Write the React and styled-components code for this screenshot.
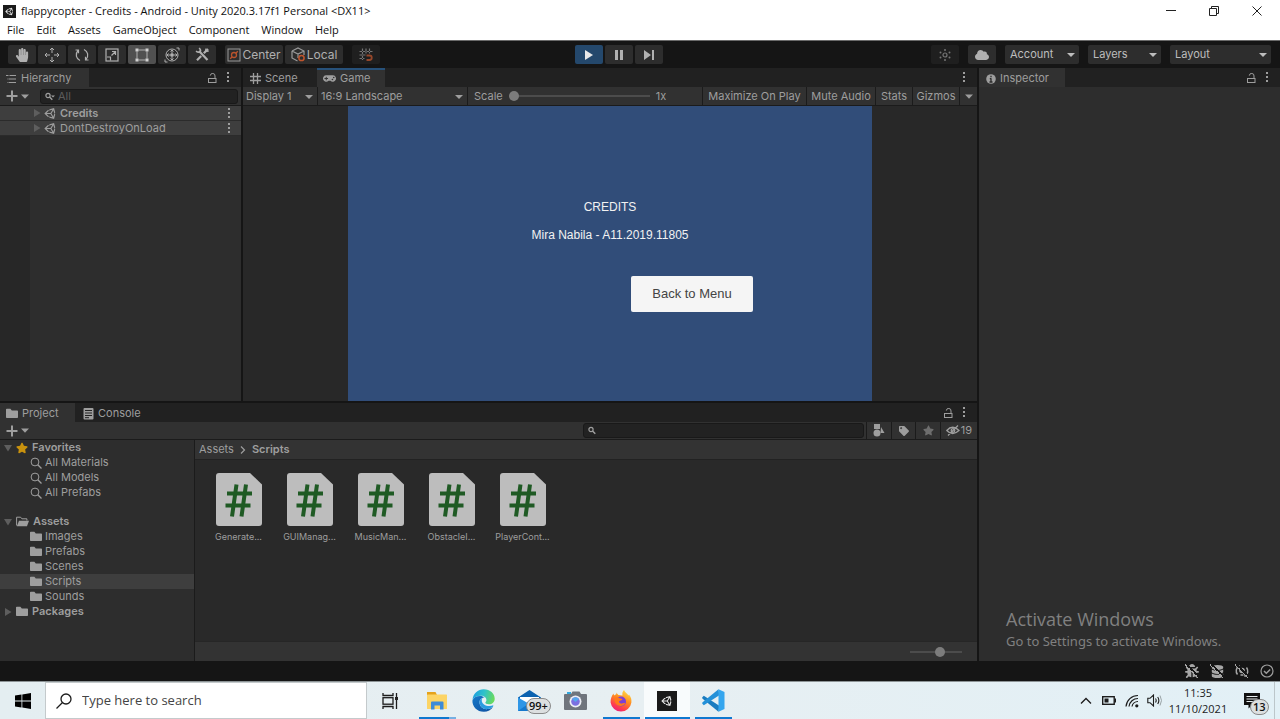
import React from "react";
import styled, { createGlobalStyle, css } from "styled-components";
import { FaHandPaper, FaUnity, FaCloud, FaStar, FaTag, FaBug, FaDatabase, FaGamepad } from "react-icons/fa";

const color = {
  bar: "#151515",
  strip: "#212121",
  panel: "#2d2d2d",
  tool: "#313131",
  deep: "#292929",
  line: "#1b1b1b",
  select: "#3e3e3e",
  text: "#9e9e9e",
  bright: "#bdbdbd",
  dim: "#5c5c5c",
};

const Global = createGlobalStyle`
  * { box-sizing: border-box; }
  body { margin: 0; background: ${color.bar}; }
  button, input, select { font: inherit; color: inherit; border: 0; margin: 0; padding: 0; background: none; border-radius: 0; outline: 0; }
  ul, ol { list-style: none; margin: 0; padding: 0; }
  h1, h2, p { margin: 0; font-weight: 400; }
  svg { display: block; flex: none; }
`;

const Page = styled.div`
  min-height: 100vh;
  display: flex;
  flex-direction: column;
  font: 11px/15px Inter, "Liberation Sans", sans-serif;
  color: ${color.text};
  white-space: nowrap;
`;

/* window frame */
const TitleBar = styled.header`
  display: flex;
  align-items: center;
  height: 22px;
  padding-left: 3px;
  gap: 5px;
  background: #fff;
  color: #111;
  font: 11px/16px "Open Sans", "Noto Sans", sans-serif;
`;
const AppBadge = styled.span`
  display: grid;
  place-items: center;
  width: ${(p) => p.$size}px;
  height: ${(p) => p.$size}px;
  background: #1a1a1a;
  color: #e6e6e6;
`;
const WindowButtons = styled.div`
  display: flex;
  margin-left: auto;
`;
const WindowButton = styled.button`
  display: grid;
  place-items: center;
  width: 43px;
  height: 20px;
  color: #222;
  &:last-child { margin-right: 2px; }
`;
const MenuBar = styled.nav`
  display: flex;
  gap: 12px;
  height: 19px;
  padding: 0 0 2px 7px;
  background: #fff;
  color: #111;
  border-bottom: 1px solid #6a6a6a;
  font: 11px/16px "Open Sans", "Noto Sans", sans-serif;
`;

/* top toolbar */
const Toolbar = styled.div`
  display: grid;
  grid-template-columns: 1fr auto 1fr;
  align-items: center;
  height: 27px;
  padding: 0 9px 0 8px;
  background: ${color.bar};
`;
const ToolSide = styled.div`
  display: flex;
  gap: 9px;
  justify-content: ${(p) => (p.$end ? "flex-end" : "flex-start")};
`;
const ButtonGroup = styled.div`
  display: flex;
  gap: 2px;
`;
const PlayGroup = styled(ButtonGroup)`
  margin-right: 42px;
`;
const ToolButton = styled.button`
  display: flex;
  align-items: center;
  justify-content: center;
  gap: 1px;
  width: ${(p) => p.$w || 28}px;
  height: 19px;
  border-radius: 2px;
  background: ${(p) => (p.$play ? "#24486c" : p.$on ? "#505050" : p.$faint ? "#1f1f1f" : "#2d2d2d")};
  color: ${(p) => (p.$faint ? "#747474" : "#b0b0b0")};
  ${(p) => p.$play && css`color: #e8e8e8;`}
`;
const WordButton = styled(ToolButton)`
  width: 58px;
  font-size: 12px;
`;
const SelectWrap = styled.label`
  position: relative;
  display: flex;
  align-items: center;
  width: ${(p) => p.$w}px;
  height: 19px;
  border-radius: ${(p) => (p.$flat ? 0 : 2)}px;
  background: ${(p) => (p.$flat ? "none" : "#2d2d2d")};
  color: ${(p) => (p.$flat ? color.text : color.bright)};
  &::after {
    content: "";
    position: absolute;
    right: 4px;
    top: 8px;
    border: 4px solid transparent;
    border-top-color: currentColor;
    border-bottom: 0;
    pointer-events: none;
  }
`;
const Select = styled.select`
  appearance: none;
  width: 100%;
  height: 100%;
  padding-left: ${(p) => p.$pad}px;
`;

/* docked panels */
const Workspace = styled.main`
  flex: 1;
  display: grid;
  grid-template-columns: minmax(0, 1fr) 301px;
  gap: 2px;
  background: ${color.bar};
`;
const LeftSide = styled.div`
  display: flex;
  flex-direction: column;
  gap: 2px;
`;
const UpperDock = styled.div`
  flex: 1;
  display: grid;
  grid-template-columns: 241px minmax(0, 1fr);
  gap: 2px;
`;
const Panel = styled.section`
  display: flex;
  flex-direction: column;
  min-width: 0;
  background: ${color.panel};
`;
const ProjectPanel = styled(Panel)`
  min-height: 258px;
`;
const TabStrip = styled.div`
  display: flex;
  align-items: stretch;
  height: 19px;
  padding-right: 11px;
  background: ${color.strip};
`;
const Tab = styled.button`
  display: flex;
  align-items: center;
  gap: 4px;
  width: ${(p) => p.$w}px;
  padding-left: ${(p) => p.$pad || 6}px;
  border-top: 2px solid ${(p) => (p.$focus ? "#27517a" : p.$on ? color.tool : "transparent")};
  background: ${(p) => (p.$on ? color.tool : "none")};
`;
const StripTools = styled.div`
  display: flex;
  align-items: center;
  gap: 9px;
  margin-left: auto;
`;
const IconButton = styled.button`
  display: grid;
  place-items: center;
`;
const PanelBar = styled.div`
  display: flex;
  align-items: center;
  height: ${(p) => p.$h || 19}px;
  background: ${color.tool};
  border-bottom: 1px solid ${color.line};
`;
const AddButton = styled.button`
  display: flex;
  align-items: center;
  gap: 3px;
  padding: 0 11px 0 6px;
`;
const SearchField = styled.label`
  display: flex;
  align-items: center;
  gap: 3px;
  width: ${(p) => p.$w}px;
  height: 15px;
  margin: ${(p) => (p.$end ? "0 2px 0 auto" : "0")};
  padding-left: 4px;
  border: 1px solid #191919;
  border-radius: 3px;
  background: #222;
`;
const SearchInput = styled.input`
  flex: 1;
  min-width: 0;
  &::placeholder { color: ${color.dim}; opacity: 1; }
`;
const ScenePane = styled.div`
  flex: 1;
  background: linear-gradient(to right, #272727 30px, ${color.panel} 30px);
`;
const SceneRow = styled.li`
  display: flex;
  align-items: center;
  gap: 3px;
  height: 15px;
  padding: 0 10px 0 33px;
  background: ${color.select};
  border-bottom: 1px solid #2b2b2b;
  font-weight: ${(p) => (p.$bold ? 600 : 400)};
  & > button { margin-left: auto; }
`;
const Cell = styled.div`
  display: flex;
  align-items: center;
  height: 100%;
  width: ${(p) => p.$w}px;
  flex: ${(p) => (p.$grow ? 1 : "none")};
  padding-left: ${(p) => p.$pad || 0}px;
  gap: 6px;
`;
const BarButton = styled.button`
  display: flex;
  align-items: center;
  justify-content: center;
  gap: 1px;
  flex: none;
  width: ${(p) => p.$w}px;
  height: 18px;
  border-left: 1px solid ${color.line};
  color: ${(p) => (p.$muted ? "#6e6e6e" : color.text)};
`;
const DividedCell = styled(Cell)`
  border-right: 1px solid ${color.line};
`;
const Range = styled.input`
  appearance: none;
  width: ${(p) => p.$w}px;
  height: 10px;
  background: linear-gradient(#4c4c4c, #4c4c4c) center / 100% 2px no-repeat;
  &::-webkit-slider-thumb {
    appearance: none;
    width: 10px;
    height: 10px;
    border-radius: 50%;
    background: #7c7c7c;
  }
`;

/* game view */
const GameArea = styled.div`
  flex: 1;
  display: flex;
  justify-content: center;
  background: #282828;
`;
const GameCanvas = styled.div`
  display: flex;
  flex-direction: column;
  align-items: center;
  width: 524px;
  max-width: 100%;
  padding-top: 93px;
  background: #314d79;
  color: #f2f2f2;
  font: 13px/16px "Liberation Sans", Arial, sans-serif;
`;
const GameTitle = styled.h1`
  font-size: 12px;
  line-height: 16px;
  margin-bottom: 12px;
`;
const GameLine = styled.p`
  font-size: 12px;
`;
const MenuButton = styled.button`
  margin: 33px 0 0 164px;
  width: 122px;
  height: 36px;
  border-radius: 2px;
  background: #f5f5f5;
  color: #444;
`;

/* project panel */
const ProjectBody = styled.div`
  flex: 1;
  display: grid;
  grid-template-columns: 195px minmax(0, 1fr);
`;
const Tree = styled.ul`
  border-right: 1px solid ${color.line};
`;
const TreeRow = styled.li`
  height: 15px;
  margin-bottom: ${(p) => (p.$gap ? 14 : 0)}px;
  background: ${(p) => (p.$on ? color.select : "none")};
`;
const TreeButton = styled.button`
  display: flex;
  align-items: center;
  gap: ${(p) => (p.$child ? 3 : 4)}px;
  width: 100%;
  height: 15px;
  padding-left: ${(p) => (p.$child ? 30 : 4)}px;
  font-weight: ${(p) => (p.$child ? 400 : 600)};
`;
const Browser = styled.div`
  display: flex;
  flex-direction: column;
  background: ${color.deep};
`;
const Crumbs = styled.nav`
  display: flex;
  align-items: center;
  gap: 6px;
  height: 20px;
  padding-left: 4px;
  background: #333;
  border-bottom: 1px solid #222;
`;
const Current = styled.span`
  font-weight: 600;
`;
const Files = styled.ul`
  flex: 1;
  display: flex;
  padding: 13px 8px;
`;
const FileButton = styled.button`
  display: flex;
  flex-direction: column;
  align-items: center;
  gap: 4px;
  width: 71px;
  font-size: 9px;
  line-height: 14px;
`;
const BrowserFooter = styled.div`
  display: flex;
  align-items: center;
  justify-content: flex-end;
  height: 20px;
  padding-right: 15px;
  background: #333;
  border-top: 1px solid #262626;
`;

/* activation notice */
const Watermark = styled.aside`
  margin-top: auto;
  padding: 0 0 10px 27px;
  color: #808080;
  font: 13px/20px "Noto Sans", "Open Sans", sans-serif;
`;
const WatermarkTitle = styled.h2`
  font: 18px/23px "Open Sans", "Noto Sans", sans-serif;
`;

const StatusBar = styled.footer`
  display: flex;
  align-items: center;
  justify-content: flex-end;
  gap: 11px;
  height: 20px;
  padding-right: 6px;
  background: ${color.bar};
`;

/* taskbar */
const Taskbar = styled.nav`
  display: flex;
  height: 38px;
  border-top: 1px solid #8d9496;
  background: linear-gradient(to right, #e4eef1, #e7eff2 50%, #e2f0f6);
  color: #1c1c1c;
  font-family: "Open Sans", "Noto Sans", sans-serif;
`;
const TaskButton = styled.button`
  position: relative;
  display: grid;
  place-items: center;
  width: ${(p) => p.$w || 46}px;
  height: 37px;
  background: ${(p) => (p.$active ? "#f8fbfc" : "none")};
  &::after {
    content: "";
    position: absolute;
    left: ${(p) => (p.$active ? 1 : 5)}px;
    right: ${(p) => (p.$active ? 0 : 4)}px;
    bottom: 0;
    height: 2px;
    background: ${(p) => (p.$multi ? "linear-gradient(to right, #0f78d0 30px, #76b0e2 30px)" : p.$run || p.$active ? "#0f78d0" : "none")};
  }
`;
const TaskSearch = styled.label`
  display: flex;
  align-items: center;
  gap: 10px;
  width: 322px;
  padding-left: 10px;
  background: #fff;
  border: 1px solid #c4cacc;
`;
const TaskInput = styled.input`
  flex: 1;
  font-size: 13px;
  &::placeholder { color: #444; opacity: 1; }
`;
const Count = styled.span`
  position: absolute;
  left: ${(p) => p.$x}px;
  top: ${(p) => p.$y}px;
  padding: 0 2px;
  min-width: 18px;
  border: 1px solid #8a8a8a;
  border-radius: 8px;
  background: #dcdfe0;
  color: #111;
  font-size: 11px;
  font-weight: 600;
  line-height: 14px;
  text-align: center;
`;
const Tray = styled.div`
  display: flex;
  align-items: center;
  margin-left: auto;
  padding-right: 2px;
`;
const TrayButton = styled.button`
  display: grid;
  place-items: center;
  width: 23px;
  height: 37px;
`;
const Clock = styled.button`
  width: 64px;
  font-size: 11px;
  line-height: 16px;
  text-align: center;
`;
const ShowDesktop = styled.button`
  width: 4px;
  height: 37px;
  border-left: 1px solid #bcc6ca;
`;

/* drawings */
const Ico = ({ s = 16, w = s, h = s, vb = `0 0 ${w} ${h}`, sw = 1, children }) => (
  <svg width={w} height={h} viewBox={vb} fill="none" stroke="currentColor" strokeWidth={sw} aria-hidden="true">
    {children}
  </svg>
);
const Fill = { fill: "currentColor", stroke: "none" };

const Dots = () => (
  <Ico w={4} h={11}>
    <g {...Fill}><rect x="1" y="0" width="2" height="2" /><rect x="1" y="4" width="2" height="2" /><rect x="1" y="8" width="2" height="2" /></g>
  </Ico>
);
const Lock = () => (
  <Ico w={9} h={10}><rect x=".5" y="5.5" width="7.5" height="4" /><path d="M7 5.500V3A2.200 2.200 0 0 0 2.300 2.600" /></Ico>
);
const Down = () => <Ico w={8} h={5}><path d="M0 .5h8L4 4.800z" {...Fill} /></Ico>;
const Fold = ({ open }) => (
  <Ico w={8} h={8}><path d={open ? "M0 1h8L4 7.500z" : "M1 0v8l6.500-4z"} fill="#5e5e5e" stroke="none" /></Ico>
);
const Plus = () => <Ico w={12} h={12} sw={2}><path d="M6 .5v11M.5 6h11" /></Ico>;
const Folder = () => <Ico w={12} h={11}><path {...Fill} d="M0 1.500Q0 .7.8.7h3.600l1.400 1.800h5.400q.8 0 .8.8v6q0 .8-.8.8H.8Q0 10.100 0 9.300z" /></Ico>;
const FolderOpen = () => (
  <Ico w={13} h={11}><path d="M.6 9.500V1.200h4l1.300 1.600h5v1.700" /><path {...Fill} d="M3 4.800h10l-2 5.400H.8z" /></Ico>
);
const Magnify = () => <Ico s={12}><circle cx="5" cy="5" r="3.900" /><path d="M7.800 7.800l3.700 3.700" strokeWidth="1.300" /></Ico>;
const SmallMag = ({ arrow }) => (
  <Ico w={10} h={9}><circle cx="3" cy="3.500" r="2.100" strokeWidth="1.200" /><path d="M4.500 5l2.800 2.800" strokeWidth="1.500" />{arrow && <path {...Fill} d="M6 3.500h4L8 5.500z" />}</Ico>
);
const HierarchyIcon = () => <Ico w={11} h={10} sw={1.2}><path d="M0 1.500h2.500M3.500 1.500H10M2.500 5H10M2.500 8.500H10M1.500 5h.5M1.500 8.500h.5" /></Ico>;
const GridIcon = () => <Ico w={11} h={11} sw={1.3}><path d="M3.500 0v11M7.500 0v11M0 3.500h11M0 7.500h11" /></Ico>;
const ConsoleIcon = () => (
  <Ico w={11} h={12}><rect {...Fill} x=".5" y="0" width="10" height="11.500" rx="1" /><path d="M2 2.500h7M2 5h7M2 7.500h7M2 9.700h4" stroke="#222" /></Ico>
);
const InfoIcon = () => (
  <Ico w={10} h={10}><circle {...Fill} cx="5" cy="5" r="4.800" /><path d="M5 1.800v1.500M5 4.300v3.700M3.800 4.600H5M3.500 8h3" stroke="#2a2a2a" strokeWidth="1.300" /></Ico>
);

const MoveIcon = () => (
  <Ico s={16}><path d="M8 1v5M8 10v5M1 8h5M10 8h5M6 3l2-2 2 2M6 13l2 2 2-2M3 6L1 8l2 2M13 6l2 2-2 2" /></Ico>
);
const RotateIcon = () => (
  <Ico s={16} sw={1.2}><path d="M6 13.500C2 11.500 1 7 4 3.500M1.500 3h3v3.200M10 2.500c4 2 5 6.500 2 10M14.500 13h-3V9.800" /></Ico>
);
const ScaleIcon = () => <Ico s={14} sw={1.2}><rect x="1" y="1" width="12" height="12" /><path d="M2 9h3.500v3.500M6.500 7.500L10.500 3.500M7 3.500h3.500V7" /></Ico>;
const RectIcon = () => (
  <Ico s={14}><path d="M3.500 2h7M3.500 12h7M2 3.500v7M12 3.500v7" /><g fill="#d0d0d0" stroke="none"><rect x="0.500" y="0.500" width="3" height="3" /><rect x="10.500" y="0.500" width="3" height="3" /><rect x="0.500" y="10.500" width="3" height="3" /><rect x="10.500" y="10.500" width="3" height="3" /></g></Ico>
);
const TransformIcon = () => (
  <Ico s={16}><circle cx="8" cy="8" r="6" /><path d="M8 3v10M3 8h10M6.500 4.500L8 3l1.500 1.500M6.500 11.500L8 13l1.500-1.500M4.500 6.500L3 8l1.500 1.500M11.500 6.500L13 8l-1.500 1.500M12.500 1H15v2.500M1 12.500V15h2.500" /><rect {...Fill} x="6.500" y="6.500" width="3" height="3" /></Ico>
);
const ToolsIcon = () => (
  <Ico s={15}><path d="M4 4l8.500 9" strokeWidth="2.200" /><path d="M1 4.200Q3.500 6 5 4.800T4.200 1" strokeWidth="1.600" /><path d="M13 2L8.800 6.300M6.200 9L2 13.200" strokeWidth="2.200" /><path d="M11 1.500L10.500 4.500 13.700 4" strokeWidth="1.300" /></Ico>
);
const CenterIcon = () => (
  <Ico s={14}><rect x="1" y="1" width="12" height="12" stroke="#999" /><g stroke="#b9532d" strokeWidth="1.300"><circle cx="7" cy="7" r="2.500" /><path d="M8.800 5.200l2-2M5.200 8.800l-2 2" /></g></Ico>
);
const LocalIcon = () => (
  <Ico s={15}><path d="M1 4l6-3 6 3v4M1 4v7l5.500 3M1 4l6 3 6-3M7 7v4" stroke="#999" strokeWidth="1.200" /><circle cx="10.500" cy="11" r="2.600" stroke="#c0552d" strokeWidth="1.500" /></Ico>
);
const SnapIcon = () => (
  <Ico s={14} sw={1.2}><path d="M3.500 .5V12M7 .5v5M10.500 .5v5M.5 3.500h13M.5 7h6M.5 10.500h5" strokeDasharray="2.500 1" /><path d="M7.500 7.500h3a2.200 2.200 0 0 1 0 4.500h-3" stroke="#96472a" strokeWidth="1.800" /></Ico>
);
const CollabIcon = () => (
  <Ico s={12}><circle cx="6" cy="6" r="2" strokeWidth="1.200" /><g {...Fill}><circle cx="6" cy="1" r="1" /><circle cx="6" cy="11" r="1" /><circle cx="1.500" cy="3.500" r="1" /><circle cx="10.500" cy="3.500" r="1" /><circle cx="1.500" cy="8.500" r="1" /><circle cx="10.500" cy="8.500" r="1" /></g></Ico>
);
const FilterIcon = () => <Ico w={12} h={13}><g {...Fill}><rect x="1" y="0" width="6" height="5" /><circle cx="4" cy="9" r="3.500" /><path d="M8 3l3.500 6H7.500z" /></g></Ico>;
const HiddenIcon = () => (
  <Ico w={14} h={11} sw={1.3}><path d="M.8 5.500Q6.500-1 13 5.500 6.500 11.500.8 5.500zM2 10.500L12 .5" /><circle cx="7" cy="5.500" r="1.800" /></Ico>
);
const ScriptIcon = () => (
  <svg width="46" height="53" viewBox="0 0 46 53" aria-hidden="true">
    <path d="M3 0h31l12 11.500V50a3 3 0 0 1-3 3H3a3 3 0 0 1-3-3V3a3 3 0 0 1 3-3z" fill="#bdbdbd" />
    <path d="M20.500 11.500l-4.500 32M30 11.500l-4.500 32M11 20.500h25M9.500 32.500h25" stroke="#1f5a24" strokeWidth="4" fill="none" />
  </svg>
);
const Slash = styled.span`
  position: relative;
  display: grid;
  place-items: center;
  width: 14px;
  height: 14px;
  color: #a6a6a6;
  &::after {
    content: "";
    position: absolute;
    inset: 0;
    background: linear-gradient(45deg, transparent 44%, #a6a6a6 44% 50%, ${color.bar} 50% 58%, transparent 58%);
  }
`;
const CheckRing = () => <Ico s={14} sw={1.2}><circle cx="7" cy="7" r="6" /><path d="M4 7l2.300 2.300L10.200 5.500" strokeWidth="1.500" /></Ico>;
const LightIcon = () => <Ico s={14} sw={1.5}><circle {...Fill} cx="7" cy="6.500" r="2.800" /><path d="M2.500 10.500A5.700 5.700 0 0 1 4 2M11.500 3.500A5.700 5.700 0 0 1 10 12M5.500 11h3M1.500 2H4v2.500M12.500 12H10V9.500" /></Ico>;

const WindowsLogo = () => (
  <Ico w={16} h={16}><path fill="#000" stroke="none" d="M0 2.500L6.500 1.500v6H0zM7.300 1.400L16 0v7.500H7.300zM0 8.400h6.500v6L0 13.500zM7.300 8.400H16V16l-8.700-1.400z" /></Ico>
);
const TaskView = () => (
  <Ico w={17} h={16} sw={1.3}><path d="M1 0v2.500h10V0M1 16v-2.500h10V16M14.500 0v16" /><rect x="1" y="4.700" width="10" height="6.500" /><rect x="13" y="4" width="3" height="3" fill="#222" stroke="none" /></Ico>
);
const Explorer = () => (
  <Ico w={20} h={18}><g stroke="none"><path fill="#e5a21b" d="M0 0h8.500l1.500 3H0z" /><rect y="2.500" width="20" height="14.500" rx=".6" fill="#fcd465" /><path fill="#3d8bd8" d="M4 17.500V10.500Q4 9.500 5 9.500h10.500q1 0 1 1v7h-3.500V13.500H7.500v4z" /></g></Ico>
);
const Edge = () => (
  <svg width="23" height="23" viewBox="0 0 23 23" aria-hidden="true">
    <defs>
      <linearGradient id="edgeTop" x1="0" x2="1" y1=".3" y2=".5"><stop offset="0" stopColor="#1b9de2" /><stop offset=".5" stopColor="#2fc2c9" /><stop offset="1" stopColor="#6bdb5a" /></linearGradient>
      <linearGradient id="edgeLow" x1="0" x2="1" y1="0" y2="1"><stop offset="0" stopColor="#1679c9" /><stop offset="1" stopColor="#0f4f9f" /></linearGradient>
    </defs>
    <path fill="url(#edgeTop)" d="M.5 11C1 4.500 6 .3 11.700.3c6.500 0 11 4.500 11 9.400 0 3.400-2.600 5.600-5.700 5.600-2.500 0-4-.9-3.600-2 .3-.6 1-1 1-2.400 0-2.400-2.500-4.200-5.400-4.200C5.500 6.700 2 8 .5 11z" />
    <path fill="url(#edgeLow)" d="M.4 11.500C1.600 8.200 4.700 6.900 8 6.900c2 0 3.600.7 4.700 1.600-3.600 0-5.200 2.200-5.200 5 0 4 4 7.300 8.300 6.600 2.200-.4 4-1.300 5.500-2.700-2 3.500-5.600 5.400-9.500 5.400C5 22.800.2 17.600.4 11.500z" />
    <path fill="#2a9be0" d="M7.500 13.500c0-2.300 1-4 3-4.800-1.500 2.200-1 5 1.500 6.800 2.600 1.900 6.500 2 9.300.8l-.2 1.300c-1.500 1.300-3.300 2.200-5.300 2.500-4.300.7-8.300-2.600-8.300-6.600z" />
  </svg>
);
const Mail = () => (
  <Ico w={23} h={21}><g stroke="none"><path fill="#0b62b0" d="M0 7.500L11.500 0 23 7.500V20H0z" /><path fill="#fff" d="M2 7h19v5l-9.500 4L2 12z" /><path fill="#2f96e6" d="M0 7.500L11.500 14 23 7.500V21H0z" /><path fill="#1679cd" d="M0 21L11.500 13 23 21z" /></g></Ico>
);
const Camera = () => (
  <Ico w={23} h={19}><g stroke="none"><path fill="#70757d" d="M1 3h6l1.500-2.500h7L17 3h5q1 0 1 1v14q0 1-1 1H1q-1 0-1-1V4q0-1 1-1z" /><rect x="3" y="1" width="4" height="2" fill="#31a8e0" /><circle cx="11.500" cy="10.500" r="6" fill="#eceef4" /><circle cx="11.500" cy="10.500" r="4.300" fill="#7b6fe0" /><path fill="#55a7ec" d="M8 8a4.300 4.300 0 0 1 7 0l-3.500 3z" /></g></Ico>
);
const Firefox = () => (
  <svg width="22" height="22" viewBox="0 0 22 22" aria-hidden="true">
    <defs><linearGradient id="fox" x1=".8" x2=".3" y1="0" y2="1"><stop offset="0" stopColor="#ffe24a" /><stop offset=".45" stopColor="#ff8a1f" /><stop offset=".8" stopColor="#ff3a4f" /><stop offset="1" stopColor="#e6207f" /></linearGradient></defs>
    <path fill="url(#fox)" d="M14 0c1 2.500 3.500 3.500 4.500 5.500l.5-1c2 2.500 2.700 5 2.400 8A10.500 10.500 0 0 1 .6 12.500C.4 9 1.500 6 3.500 3.500L4 5.500 6.500 4 6 2.500 8.500 5l4 .5C12 3.500 12.500 1.500 14 0z" />
    <circle cx="11" cy="11.500" r="5" fill="#7a40d8" />
    <path fill="#ff7a1c" d="M4.500 8c2-1.500 4-.8 5 .2l3 .8c-.8 1.700-2.600 1.500-3.300 2.300-.5 1.300.8 2.500 2.500 2.200 1.500-.3 2.300-.7 3.500-.2-1 2.200-3.500 3.300-6 2.500C6 15 4 12 4.500 8z" />
  </svg>
);
const VSCode = () => (
  <Ico w={23} h={23}><g stroke="none"><path fill="#1a7cc0" d="M1.800 6.800L.3 8.200v1.200L16.500 22.700l.8-6z" /><path fill="#2390d8" d="M1.800 16.200L.3 14.800v-1.200L16.500.3l.8 6z" /><path fill="#35a6ee" d="M16.500.3L22.500 3v17l-6 2.700z" /></g></Ico>
);
const NoticeIcon = () => <Ico w={16} h={16}><path fill="#111" stroke="none" d="M0 0h16v12H8l-3.500 3.500V12H0z" /><path d="M2.500 3.500h11M2.500 6h11M2.500 8.500h11" stroke="#e8eef0" /></Ico>;
const Wifi = () => <Ico s={14} sw={1.2}><path d="M1 12.500A12 12 0 0 1 13 1.500M4 12.500a9 9 0 0 1 9-8M7 12.500a6 6 0 0 1 6-5" /><circle {...Fill} cx="11.800" cy="11.800" r="1.600" /></Ico>;
const Volume = () => <Ico w={16} h={13}><path d="M.8 4.300H3L6.500 1v11L3 8.700H.8zM8.500 4.500q1.400 2 0 4M10.700 3q2.300 3.500 0 7" strokeWidth="1.100" /><path d="M13 1.500q3 5 0 10" stroke="#9aa3a6" /></Ico>;
const Battery = () => <Ico w={14} h={9}><rect x=".7" y=".7" width="11.500" height="7.600" strokeWidth="1.400" /><path {...Fill} d="M2.500 2.500h4v4h-4zM12.500 2.500h1.500v4h-1.500z" /></Ico>;

const tools = [
  ["Hand", <FaHandPaper size={14} />],
  ["Move", <MoveIcon />],
  ["Rotate", <RotateIcon />],
  ["Scale", <ScaleIcon />],
  ["Rect", <RectIcon />],
  ["Transform", <TransformIcon />],
  ["Custom tools", <ToolsIcon />],
];
const menus = ["File", "Edit", "Assets", "GameObject", "Component", "Window", "Help"];
const favorites = ["All Materials", "All Models", "All Prefabs"];
const folders = ["Images", "Prefabs", "Scenes", "Scripts", "Sounds"];
const scripts = ["Generate...", "GUIManag...", "MusicMan...", "ObstacleI...", "PlayerCont..."];

const Dropdown = ({ label, w, flat, pad = 5 }) => (
  <SelectWrap $w={w} $flat={flat}>
    <Select $pad={pad} aria-label={label}><option>{label}</option></Select>
  </SelectWrap>
);
const PanelMenu = ({ lock }) => (
  <StripTools>
    {lock && <IconButton aria-label="Lock"><Lock /></IconButton>}
    <IconButton aria-label="Panel menu"><Dots /></IconButton>
  </StripTools>
);

export default function App() {
  return (
    <Page>
      <Global />
      <TitleBar>
        <AppBadge $size={13}><FaUnity size={9} /></AppBadge>
        <span>flappycopter - Credits - Android - Unity 2020.3.17f1 Personal &lt;DX11&gt;</span>
        <WindowButtons>
          <WindowButton aria-label="Minimize"><Ico s={10}><path d="M0 4.500h10" /></Ico></WindowButton>
          <WindowButton aria-label="Restore"><Ico s={10}><path d="M.5 2.500h7v7h-7zM2.500 2.500v-2h7v7h-2" /></Ico></WindowButton>
          <WindowButton aria-label="Close"><Ico s={10}><path d="M.5.5l9 9M9.500.5l-9 9" /></Ico></WindowButton>
        </WindowButtons>
      </TitleBar>
      <MenuBar>
        {menus.map((m) => <button key={m}>{m}</button>)}
      </MenuBar>

      <Toolbar>
        <ToolSide>
          <ButtonGroup>
            {tools.map(([name, icon]) => <ToolButton key={name} aria-label={name} $on={name === "Rect"}>{icon}</ToolButton>)}
          </ButtonGroup>
          <ButtonGroup>
            <WordButton><CenterIcon />Center</WordButton>
            <WordButton><LocalIcon />Local</WordButton>
          </ButtonGroup>
          <ToolButton $faint aria-label="Grid snapping"><SnapIcon /></ToolButton>
        </ToolSide>
        <PlayGroup>
          <ToolButton $play aria-label="Play"><Ico w={8} h={10}><path {...Fill} d="M0 0v10l8-5z" /></Ico></ToolButton>
          <ToolButton aria-label="Pause"><Ico w={8} h={10}><path {...Fill} d="M0 0h3v10H0zM5 0h3v10H5z" /></Ico></ToolButton>
          <ToolButton aria-label="Step"><Ico w={10} h={10}><path {...Fill} d="M0 0v10l7-5zM8 0h2v10H8z" /></Ico></ToolButton>
        </PlayGroup>
        <ToolSide $end>
          <ToolButton $faint aria-label="Collaborate"><CollabIcon /></ToolButton>
          <ToolButton aria-label="Cloud"><FaCloud size={14} /></ToolButton>
          <Dropdown label="Account" w={74} />
          <Dropdown label="Layers" w={73} />
          <Dropdown label="Layout" w={101} />
        </ToolSide>
      </Toolbar>

      <Workspace>
        <LeftSide>
          <UpperDock>
            <Panel>
              <TabStrip>
                <Tab $on $w={89}><HierarchyIcon />Hierarchy</Tab>
                <PanelMenu lock />
              </TabStrip>
              <PanelBar>
                <AddButton aria-label="Create"><Plus /><Down /></AddButton>
                <SearchField $w={198}><SmallMag arrow /><SearchInput placeholder="All" aria-label="Search hierarchy" /></SearchField>
              </PanelBar>
              <ScenePane>
                <ul>
                  <SceneRow $bold><Fold /><FaUnity size={13} />Credits<IconButton aria-label="Scene menu"><Dots /></IconButton></SceneRow>
                  <SceneRow><Fold /><FaUnity size={13} />DontDestroyOnLoad<IconButton aria-label="Scene menu"><Dots /></IconButton></SceneRow>
                </ul>
              </ScenePane>
            </Panel>

            <Panel>
              <TabStrip>
                <Tab $w={74} $pad={7}><GridIcon />Scene</Tab>
                <Tab $on $focus $w={68}><FaGamepad size={13} />Game</Tab>
                <PanelMenu />
              </TabStrip>
              <PanelBar>
                <DividedCell $w={75}><Dropdown label="Display 1" w={74} flat pad={3} /></DividedCell>
                <DividedCell $w={150}><Dropdown label="16:9 Landscape" w={149} flat pad={3} /></DividedCell>
                <Cell as="label" $grow $pad={6}>Scale<Range type="range" $w={141} defaultValue={0} />1x</Cell>
                <BarButton $w={104}>Maximize On Play</BarButton>
                <BarButton $w={69}>Mute Audio</BarButton>
                <BarButton $w={37}>Stats</BarButton>
                <BarButton $w={47}>Gizmos</BarButton>
                <BarButton $w={18} aria-label="Gizmo options"><Down /></BarButton>
              </PanelBar>
              <GameArea>
                <GameCanvas>
                  <GameTitle>CREDITS</GameTitle>
                  <GameLine>Mira Nabila - A11.2019.11805</GameLine>
                  <MenuButton>Back to Menu</MenuButton>
                </GameCanvas>
              </GameArea>
            </Panel>
          </UpperDock>

          <ProjectPanel>
            <TabStrip>
              <Tab $on $w={75}><Folder />Project</Tab>
              <Tab $w={75} $pad={8}><ConsoleIcon />Console</Tab>
              <PanelMenu lock />
            </TabStrip>
            <PanelBar $h={18}>
              <AddButton aria-label="Create asset"><Plus /><Down /></AddButton>
              <SearchField $w={281} $end><SmallMag /><SearchInput aria-label="Search assets" /></SearchField>
              <BarButton $w={25} aria-label="Filter by type"><FilterIcon /></BarButton>
              <BarButton $w={24} aria-label="Filter by label"><FaTag size={10} /></BarButton>
              <BarButton $w={25} $muted aria-label="Favorites"><FaStar size={11} /></BarButton>
              <BarButton $w={37}><HiddenIcon />19</BarButton>
            </PanelBar>
            <ProjectBody>
              <Tree>
                <TreeRow><TreeButton><Fold open /><FaStar size={12} color="#c9920e" />Favorites</TreeButton></TreeRow>
                {favorites.map((f, i) => (
                  <TreeRow key={f} $gap={i === 2}><TreeButton $child><Magnify />{f}</TreeButton></TreeRow>
                ))}
                <TreeRow><TreeButton><Fold open /><FolderOpen />Assets</TreeButton></TreeRow>
                {folders.map((f) => (
                  <TreeRow key={f} $on={f === "Scripts"}><TreeButton $child><Folder />{f}</TreeButton></TreeRow>
                ))}
                <TreeRow><TreeButton><Fold /><Folder />Packages</TreeButton></TreeRow>
              </Tree>
              <Browser>
                <Crumbs>
                  <span>Assets</span>
                  <Ico w={6} h={8}><path d="M1 .5l3.500 3.500L1 7.500" strokeWidth="1.200" /></Ico>
                  <Current>Scripts</Current>
                </Crumbs>
                <Files>
                  {scripts.map((s) => <li key={s}><FileButton><ScriptIcon />{s}</FileButton></li>)}
                </Files>
                <BrowserFooter><Range type="range" $w={52} defaultValue={60} aria-label="Icon size" /></BrowserFooter>
              </Browser>
            </ProjectBody>
          </ProjectPanel>
        </LeftSide>

        <Panel>
          <TabStrip>
            <Tab $on $w={86} $pad={7}><InfoIcon />Inspector</Tab>
            <PanelMenu lock />
          </TabStrip>
          <Watermark>
            <WatermarkTitle>Activate Windows</WatermarkTitle>
            <p>Go to Settings to activate Windows.</p>
          </Watermark>
        </Panel>
      </Workspace>

      <StatusBar>
        <Slash><FaBug size={14} /></Slash>
        <Slash><FaDatabase size={13} /></Slash>
        <Slash><LightIcon /></Slash>
        <CheckRing />
      </StatusBar>

      <Taskbar>
        <TaskButton $w={45} aria-label="Start"><WindowsLogo /></TaskButton>
        <TaskSearch>
          <Ico s={16} sw={1.3}><circle cx="10" cy="6" r="5" /><path d="M6.500 9.500L.5 15.500" /></Ico>
          <TaskInput placeholder="Type here to search" aria-label="Type here to search" />
        </TaskSearch>
        <TaskButton $w={47} aria-label="Task view"><TaskView /></TaskButton>
        <TaskButton $run $multi aria-label="File Explorer"><Explorer /></TaskButton>
        <TaskButton aria-label="Edge"><Edge /></TaskButton>
        <TaskButton aria-label="Mail"><Mail /><Count $x={20} $y={16}>99+</Count></TaskButton>
        <TaskButton aria-label="Camera"><Camera /></TaskButton>
        <TaskButton $run aria-label="Firefox"><Firefox /></TaskButton>
        <TaskButton $active aria-label="Unity"><AppBadge $size={20}><FaUnity size={12} /></AppBadge></TaskButton>
        <TaskButton $run aria-label="Visual Studio Code"><VSCode /></TaskButton>
        <Tray>
          <TrayButton aria-label="Hidden icons"><Ico w={12} h={7} sw={1.3}><path d="M1 6.500l5-5 5 5" /></Ico></TrayButton>
          <TrayButton aria-label="Battery"><Battery /></TrayButton>
          <TrayButton aria-label="Network"><Wifi /></TrayButton>
          <TrayButton aria-label="Volume"><Volume /></TrayButton>
          <Clock>11:35<br />11/10/2021</Clock>
          <TaskButton $w={44} aria-label="Notifications"><NoticeIcon /><Count $x={20} $y={17}>13</Count></TaskButton>
          <ShowDesktop aria-label="Show desktop" />
        </Tray>
      </Taskbar>
    </Page>
  );
}
